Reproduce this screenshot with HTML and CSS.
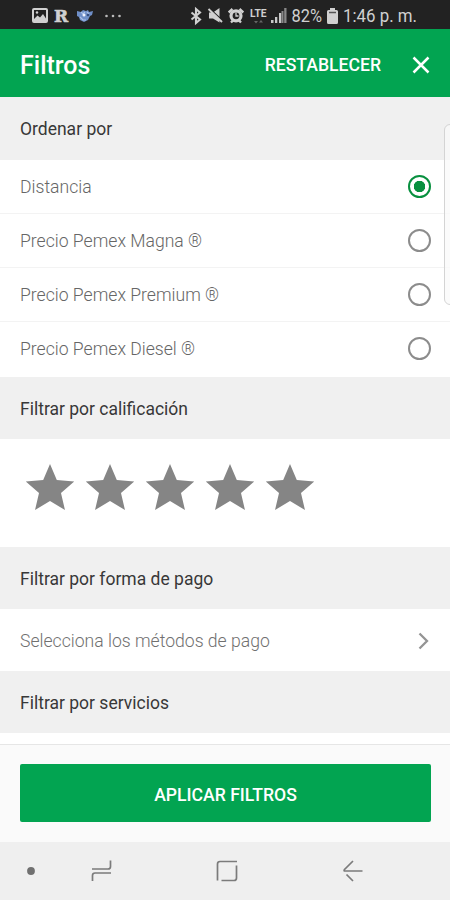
FILE: index.html
```html
<!DOCTYPE html>
<html lang="es">
<head>
    <meta charset="UTF-8">
    <meta name="viewport" content="width=device-width, initial-scale=1.0">
    <title>Filtros</title>
    <link rel="stylesheet" href="styles.css">
</head>
<body>

<div class="screen">
    <!-- Status bar -->
    <div class="status-bar">
        <div class="status-left">
            <svg width="16" height="15" viewBox="0 0 16 15">
                <rect x="1" y="1" width="14" height="13" rx="1" fill="none" stroke="#d0d0d0" stroke-width="2"/>
                <path d="M2 11l3.500-3.500 2.500 2 3-3.500 3 4.500V13H2z" fill="#d0d0d0"/>
                <circle cx="5" cy="4.500" r="1.200" fill="#d0d0d0"/>
            </svg>
            <span class="app-letter">R</span>
            <svg width="18" height="15" viewBox="0 0 18 15">
                <path d="M1 3l4 1 2-2 3 1 2-1 1 2 4-1-1 4-2 1-2 4-4 2-4-2-1-3-2-1z" fill="#6f8fc8"/>
                <path d="M5 4l2 2 2-2M11 4l2 2M4 9l3 3h3" fill="none" stroke="#a9c0e8" stroke-width="1.200"/>
                <circle cx="8" cy="7" r="1.500" fill="#eef3ff"/>
                <circle cx="12" cy="7" r="1.300" fill="#354f80"/>
            </svg>
            <svg class="dots" width="16" height="4" viewBox="0 0 16 4">
                <circle cx="1.500" cy="2" r="1.300" fill="#bbb"/>
                <circle cx="8" cy="2" r="1.300" fill="#bbb"/>
                <circle cx="14.500" cy="2" r="1.300" fill="#bbb"/>
            </svg>
        </div>
        <div class="status-right">
            <svg width="12" height="16" viewBox="0 0 12 16">
                <path d="M1.500 4.500l8.500 7L6 15V1l4 3.500-8.500 7" fill="none" stroke="#d0d0d0" stroke-width="2.100"/>
            </svg>
            <svg class="mute" width="15" height="15" viewBox="0 0 15 15">
                <path d="M1 4.500h4L11.500 0v14.500L5 10.500H1z" fill="#d0d0d0"/>
                <path d="M1 0l14 13" stroke="#222" stroke-width="1.500"/>
                <path d="M.5 1l13.500 13" stroke="#d0d0d0" stroke-width="1.900"/>
            </svg>
            <svg class="alarm" width="16" height="15" viewBox="0 0 16 15">
                <path d="M.7 4.500L4.500 1M15.300 4.500L11.500 1M3 14.500l2-2M13 14.500l-2-2" stroke="#d0d0d0" stroke-width="2.400"/>
                <circle cx="8" cy="7.800" r="5" fill="#222" stroke="#d0d0d0" stroke-width="3.200"/>
                <path d="M8 4.500V8h2.500" fill="none" stroke="#d0d0d0" stroke-width="1.300"/>
            </svg>
            <svg class="lte" width="17" height="16" viewBox="0 0 17 16">
                <text x="0" y="9" font-size="10" font-weight="700" textLength="16.500" lengthAdjust="spacingAndGlyphs">LTE</text>
                <path d="M4 13l2 2.500L8 13zM9 14.500l2-2.500 2 2.500z" fill="#666"/>
            </svg>
            <svg class="signal" width="16" height="15" viewBox="0 0 16 15">
                <path d="M0 12h2.500v3H0zM4 9h2.300v6H4zM8 5h2.300v10H8z" fill="#c8c8c8"/>
                <path d="M10.500 3h2v12h-2zM13.200 0H15.500v15h-2.300z" fill="#888"/>
            </svg>
            <svg class="percent" width="32" height="26" viewBox="0 0 32 26">
                <text x="0.500" y="19" font-size="19" textLength="30.500" lengthAdjust="spacingAndGlyphs">82%</text>
            </svg>
            <svg class="battery" width="11" height="16" viewBox="0 0 11 16">
                <path d="M3 0h5v2h1.500q1.500 0 1.500 1.500v11Q11 16 9.500 16h-8Q0 16 0 14.500v-11Q0 2 1.500 2H3z" fill="#d0d0d0"/>
                <path d="M2 4.500h7" stroke="#555" stroke-width="1.500"/>
            </svg>
            <svg class="clock" width="75" height="26" viewBox="0 0 75 26">
                <text x="0" y="19" font-size="19" textLength="74" lengthAdjust="spacingAndGlyphs">1:46 p. m.</text>
            </svg>
        </div>
    </div>

    <!-- Header -->
    <header class="header">
        <h1>Filtros</h1>
        <span class="reset">RESTABLECER</span>
        <svg class="close" width="18" height="18" viewBox="0 0 18 18">
            <path d="M1.500 1.500l15 15M16.500 1.500l-15 15" stroke="#fff" stroke-width="2.500"/>
        </svg>
    </header>

    <!-- Sort options -->
    <h2 class="section-title first">Ordenar por</h2>
    <div class="option">
        <span>Distancia</span>
        <span class="radio checked"></span>
    </div>
    <div class="option">
        <span>Precio Pemex Magna ®</span>
        <span class="radio"></span>
    </div>
    <div class="option">
        <span>Precio Pemex Premium ®</span>
        <span class="radio"></span>
    </div>
    <div class="option last">
        <span>Precio Pemex Diesel ®</span>
        <span class="radio"></span>
    </div>

    <!-- Rating -->
    <h2 class="section-title">Filtrar por calificación</h2>
    <div class="rating">
        <svg class="star" viewBox="2 2 20 19"><path d="M12 17.270L18.180 21l-1.640-7.030L22 9.240l-7.190-.61L12 2 9.190 8.630 2 9.240l5.460 4.730L5.820 21z"/></svg>
        <svg class="star" viewBox="2 2 20 19"><path d="M12 17.270L18.180 21l-1.640-7.030L22 9.240l-7.190-.61L12 2 9.190 8.630 2 9.240l5.460 4.730L5.820 21z"/></svg>
        <svg class="star" viewBox="2 2 20 19"><path d="M12 17.270L18.180 21l-1.640-7.030L22 9.240l-7.190-.61L12 2 9.190 8.630 2 9.240l5.460 4.730L5.820 21z"/></svg>
        <svg class="star" viewBox="2 2 20 19"><path d="M12 17.270L18.180 21l-1.640-7.030L22 9.240l-7.190-.61L12 2 9.190 8.630 2 9.240l5.460 4.730L5.820 21z"/></svg>
        <svg class="star" viewBox="2 2 20 19"><path d="M12 17.270L18.180 21l-1.640-7.030L22 9.240l-7.190-.61L12 2 9.190 8.630 2 9.240l5.460 4.730L5.820 21z"/></svg>
    </div>

    <!-- Payment -->
    <h2 class="section-title">Filtrar por forma de pago</h2>
    <div class="payment">
        <span>Selecciona los métodos de pago</span>
        <svg width="12" height="18" viewBox="0 0 12 18">
            <path d="M1.500 1.500L9 9l-7.500 7.500" fill="none" stroke="#949494" stroke-width="2.300"/>
        </svg>
    </div>

    <!-- Services -->
    <h2 class="section-title">Filtrar por servicios</h2>

    <div class="footer">
        <button class="apply">APLICAR FILTROS</button>
    </div>

    <!-- Navigation bar -->
    <nav class="nav-bar">
        <svg class="nav-dot" width="8" height="8" viewBox="0 0 8 8"><circle cx="4" cy="4" r="3.900" fill="#707070"/></svg>
        <svg class="nav-recents" width="22" height="22" viewBox="0 0 22 22">
            <path d="M1 9h16q2.500 0 2.500-2.500V.5M20 13H4q-2.500 0-2.500 2.500V21"/>
        </svg>
        <svg class="nav-home" width="22" height="22" viewBox="0 0 22 22">
            <path d="M21 1.500H4Q1.500 1.500 1.500 4v16.500M20.500 5.500V18q0 2.500-2.500 2.500H5.500"/>
        </svg>
        <svg class="nav-back" width="20" height="22" viewBox="0 0 20 22">
            <path d="M10 1L1.500 9.500Q.5 11 2 11h17.500M3.500 14.500L10 21"/>
        </svg>
    </nav>

    <!-- Edge panel handle -->
    <div class="edge-handle"></div>
</div>

</body>
</html>
```
FILE: styles.css
```css
* {
    box-sizing: border-box;
}

body {
    font-family: Roboto, sans-serif;
    background-color: #fff;
    margin: 0;
}

svg {
    display: block;
    flex-shrink: 0;
    overflow: visible;
}

.screen {
    position: relative;
    display: flex;
    flex-direction: column;
    width: 450px;
    height: 900px;
    overflow: hidden;
}

.status-bar {
    display: flex;
    justify-content: space-between;
    height: 29px;
    padding: 2px 32px 0 32px;
    background-color: #222;
    color: #d0d0d0;
}

.status-bar text {
    fill: #d0d0d0;
}

.status-left,
.status-right {
    display: flex;
    align-items: center;
}

.app-letter {
    width: 17px;
    margin: 0 5px 0 6px;
    font-family: "DejaVu Serif", serif;
    font-size: 17px;
    font-weight: 700;
    line-height: 20px;
    -webkit-text-stroke: 0.6px #d0d0d0;
}

.dots {
    margin-left: 11px;
}

.mute {
    margin-left: 6px;
}

.alarm {
    margin-left: 5px;
}

.lte {
    margin-left: 6px;
}

.signal {
    margin-left: 4px;
}

.percent {
    margin-left: 4px;
}

.battery {
    margin-left: 4px;
}

.clock {
    margin-left: 5px;
}

.header {
    display: flex;
    align-items: center;
    height: 68px;
    padding: 3px 20px 0 20px;
    background-color: #02a451;
    color: #fff;
}

.header h1 {
    flex: 1;
    margin: 0;
    padding-top: 2px;
    font-size: 25px;
    font-weight: 500;
}

.reset {
    font-size: 17.6px;
    font-weight: 500;
}

.close {
    margin-left: 31px;
}

.section-title {
    height: 62px;
    margin: 0;
    padding-left: 20px;
    background-color: #f0f0f0;
    color: #383838;
    font-size: 17.5px;
    font-weight: 400;
    line-height: 65px;
}

.section-title.first {
    height: 63px;
}

.option {
    display: flex;
    align-items: center;
    justify-content: space-between;
    height: 54px;
    padding: 0 19px 0 20px;
    border-bottom: 1px solid #f3f3f3;
    color: #666;
    font-size: 17.6px;
    font-weight: 300;
}

.option.last {
    height: 55px;
    padding-bottom: 2px;
    border-bottom: none;
}

.radio {
    width: 23px;
    height: 23px;
    border: 2px solid #8c8c8c;
    border-radius: 50%;
}

.radio.checked {
    border-color: #08903f;
    background: radial-gradient(circle, #08903f 5.5px, #fff 6px);
}

.rating {
    display: flex;
    gap: 10px;
    height: 108px;
    padding: 25px 25px 0;
}

.star {
    width: 50px;
    height: 46px;
    fill: #858585;
}

.payment {
    display: flex;
    align-items: center;
    justify-content: space-between;
    height: 62px;
    padding: 1px 20px 0;
    color: #707070;
    font-size: 17.6px;
    font-weight: 300;
}

.footer {
    height: 98px;
    margin-top: 11px;
    padding: 19px 19px 0 20px;
    border-top: 1px solid #e6e6e6;
    background-color: #fafafa;
}

.apply {
    display: block;
    width: 100%;
    height: 58px;
    padding: 3px 0 0;
    border: none;
    border-radius: 2px;
    background-color: #02a451;
    color: #fff;
    font-family: inherit;
    font-size: 17.6px;
    font-weight: 500;
}

.nav-bar {
    display: flex;
    align-items: center;
    flex: 1;
    padding-left: 27px;
    background-color: #efefef;
}

.nav-bar path {
    fill: none;
    stroke: #7b7b7b;
    stroke-width: 1.7;
}

.nav-recents {
    margin-left: 56px;
}

.nav-home {
    margin-left: 103px;
}

.nav-back {
    margin-left: 105px;
}

/* sits over the list, cut by the right edge */
.edge-handle {
    position: absolute;
    top: 124px;
    right: -6px;
    width: 12px;
    height: 181px;
    border: 1px solid #d4d4d4;
    border-radius: 6px;
    background-color: rgba(250, 250, 250, 0.7);
}
```
